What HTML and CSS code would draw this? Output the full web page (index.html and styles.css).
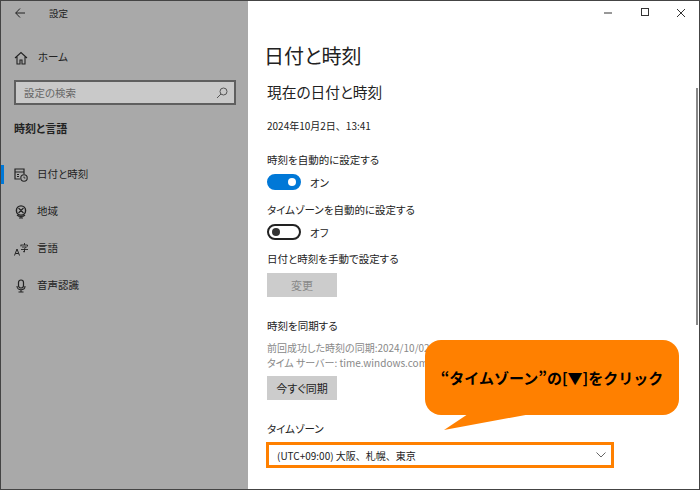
FILE: index.html
```html
<!DOCTYPE html>
<html lang="ja">
<head>
    <meta charset="UTF-8">
    <title>設定</title>
    <link rel="stylesheet" href="styles.css">
</head>
<body>
    <div class="window">
        <aside class="sidebar">
            <div class="titlebar">
                <svg class="back" width="10" height="10" viewBox="0 0 10 10"><path d="M5 .5.7 5 5 9.5M.7 5H10" fill="none" stroke="#222" stroke-width="1"/></svg>
                <span>設定</span>
            </div>
            <div class="nav-item home">
                <svg width="14" height="14" viewBox="0 0 14 14"><path d="M1 7 7 1.5 13 7M3 5.5V13h3V9h2v4h3V5.5" fill="none" stroke="#222" stroke-width="1.1"/></svg>
                <span>ホーム</span>
            </div>
            <div class="search">
                <span>設定の検索</span>
                <svg width="12" height="12" viewBox="0 0 12 12"><circle cx="7.5" cy="4.5" r="3.5" fill="none" stroke="#555"/><path d="M5 7 1 11" stroke="#555"/></svg>
            </div>
            <div class="section">時刻と言語</div>
            <nav>
                <div class="nav-item active">
                    <svg width="14" height="14" viewBox="0 0 14 14"><path d="M6 11H1V1h9v5M1 4h9M3 6.5h2M3 8.5h2" fill="none" stroke="#222" stroke-width="1.2"/><circle cx="10" cy="10" r="3.2" fill="none" stroke="#222" stroke-width="1.1"/><path d="M10 8.5V10h1.4" fill="none" stroke="#222" stroke-width=".8"/></svg>
                    <span>日付と時刻</span>
                </div>
                <div class="nav-item">
                    <svg width="14" height="14" viewBox="0 0 14 14"><circle cx="7" cy="5.5" r="4.6" fill="none" stroke="#222" stroke-width="1.4"/><path d="M4.5 3 9.5 8M9.5 3 4.5 8M3 10c2 2 6 2 8 0M7 11v2M5 13h4" fill="none" stroke="#222" stroke-width="1.1"/></svg>
                    <span>地域</span>
                </div>
                <div class="nav-item">
                    <svg width="14" height="14" viewBox="0 0 14 14"><path d="M.5 13.5 3 7l2.500 6.500M1.500 11.500h3" fill="none" stroke="#222" stroke-width="1"/><path d="M6.500 3h7M7 3v1.500M13.500 3v1.500M8 5h4.500L10.500 6.500V10L9 9.500M7 7.500h7M10.500 1v2" fill="none" stroke="#222" stroke-width=".9"/></svg>
                    <span>言語</span>
                </div>
                <div class="nav-item">
                    <svg width="14" height="14" viewBox="0 0 14 14"><rect x="4.5" y="1" width="5" height="8" rx="2.5" fill="none" stroke="#222" stroke-width="1.2"/><path d="M3 7c0 5 8 5 8 0M7 11v2M4.500 13h5" fill="none" stroke="#222" stroke-width="1.1"/></svg>
                    <span>音声認識</span>
                </div>
            </nav>
        </aside>
        <main class="content">
            <div class="caption">
                <svg width="10" height="2" viewBox="0 0 10 2"><path d="M0 1h8" stroke="#333"/></svg>
                <svg width="10" height="10" viewBox="0 0 10 10"><rect x="1.500" y=".5" width="7" height="7" fill="none" stroke="#333"/></svg>
                <svg width="10" height="10" viewBox="0 0 10 10"><path d="M1 1l8 8M9 1 1 9" stroke="#333" fill="none"/></svg>
            </div>
            <h1>日付と時刻</h1>
            <h2>現在の日付と時刻</h2>
            <p class="now">2024年10月2日、13:41</p>
            <p class="label first">時刻を自動的に設定する</p>
            <div class="toggle-row">
                <span class="toggle on"></span><span>オン</span>
            </div>
            <p class="label">タイムゾーンを自動的に設定する</p>
            <div class="toggle-row last">
                <span class="toggle off"></span><span>オフ</span>
            </div>
            <p class="label">日付と時刻を手動で設定する</p>
            <button class="btn disabled">変更</button>
            <p class="label sync">時刻を同期する</p>
            <p class="info">前回成功した時刻の同期:2024/10/02 13:41<br>タイム サーバー: time.windows.com</p>
            <button class="btn">今すぐ同期</button>
            <p class="label zone">タイムゾーン</p>
            <div class="select">
                <span>(UTC+09:00) 大阪、札幌、東京</span>
                <svg width="10" height="6" viewBox="0 0 10 6"><path d="M.5.5 5 5 9.500.5" fill="none" stroke="#666"/></svg>
            </div>
        </main>
        <div class="scrollbar"></div>
        <div class="callout">
            <span>“タイムゾーン”の[▼]をクリック</span>
        </div>
        <svg class="tail" width="90" height="16" viewBox="0 0 90 16"><path d="M25 0H88L1 16Z" fill="#ff8000"/></svg>
    </div>
</body>
</html>
```

FILE: styles.css
```css
* {
    box-sizing: border-box;
}
body {
    margin: 0;
    font-family: "Noto Sans CJK JP", "Noto Sans", sans-serif;
    font-feature-settings: "palt";
    color: #222;
}
p, h1, h2 {
    margin: 0;
    font-weight: normal;
}
.window {
    position: relative;
    display: flex;
    width: 700px;
    height: 490px;
    border: 1px solid #444;
    background-color: #fff;
    overflow: hidden;
}
.sidebar {
    width: 247px;
    flex-shrink: 0;
    background-color: #a9a9a9;
    font-size: 10.5px;
}
.titlebar {
    display: flex;
    align-items: center;
    height: 24px;
    padding-left: 14px;
    gap: 24px;
    font-size: 9.5px;
}
.nav-item {
    display: flex;
    align-items: center;
    height: 37px;
    padding-left: 13px;
    gap: 9px;
    line-height: 1;
}
.home {
    margin-top: 14px;
    gap: 10px;
}
.search {
    display: flex;
    align-items: center;
    justify-content: space-between;
    width: 222px;
    height: 25px;
    margin: 4px 0 0 13px;
    padding: 0 6px 0 8px;
    background-color: #c9c9c9;
    border: 2px solid #5f5f5f;
    color: #666;
}
.section {
    margin: 15px 0 0 13px;
    font-weight: bold;
    font-size: 11px;
    line-height: 16px;
}
nav {
    margin-top: 20px;
}
.active {
    position: relative;
}
.active::before {
    content: "";
    position: absolute;
    left: 0;
    top: 9px;
    width: 3px;
    height: 19px;
    background-color: #0078d7;
}
.content {
    flex: 1;
    padding-left: 18px;
    font-size: 10.5px;
}
.caption {
    display: flex;
    justify-content: flex-end;
    align-items: center;
    gap: 26px;
    height: 24px;
    padding-right: 13px;
}
h1 {
    margin: 17px 0 0 -2px;
    font-size: 20px;
    line-height: 28px;
}
h2 {
    margin: 12px 0 0 1px;
    font-size: 14.7px;
    line-height: 20px;
}
.now {
    margin: 17px 0 0 1px;
    line-height: 14px;
    font-size: 10px;
    font-feature-settings: normal;
}
.label {
    margin-left: 1px;
    line-height: 14px;
}
.first {
    margin-top: 20px;
}
.toggle-row {
    display: flex;
    align-items: center;
    gap: 9px;
    height: 16px;
    margin: 7px 0 13px 1px;
}
.last {
    margin-bottom: 12px;
}
.toggle {
    position: relative;
    width: 34px;
    height: 16px;
    border-radius: 8px;
    border: 2px solid #222;
}
.toggle::after {
    content: "";
    position: absolute;
    top: 2px;
    width: 8px;
    height: 8px;
    border-radius: 50%;
}
.on {
    background-color: #0078d7;
    border-color: #0078d7;
}
.on::after {
    right: 3px;
    background-color: #fff;
}
.off::after {
    left: 3px;
    background-color: #333;
}
.btn {
    display: block;
    width: 70px;
    height: 24px;
    margin: 7px 0 0 1px;
    padding: 0;
    border: none;
    background-color: #ccc;
    font: inherit;
    font-size: 11px;
    color: #222;
}
.disabled {
    color: #888;
}
.sync {
    margin-top: 22px;
}
.info {
    margin: 7px 0 0 1px;
    font-size: 10px;
    line-height: 15px;
    color: #888;
}
.info + .btn {
    margin-top: 6px;
}
.zone {
    margin-top: 22px;
}
.select {
    display: flex;
    align-items: center;
    justify-content: space-between;
    width: 348px;
    height: 26px;
    margin-top: 6px;
    padding: 0 5px 0 8px;
    border: 3px solid #ff8000;
    font-size: 10px;
    font-feature-settings: normal;
}
.scrollbar {
    position: absolute;
    right: 1px;
    top: 87px;
    width: 2px;
    height: 237px;
    background-color: #888;
}
.callout {
    position: absolute;
    left: 424px;
    top: 339px;
    display: flex;
    align-items: center;
    justify-content: center;
    width: 254px;
    height: 75px;
    border-radius: 16px;
    background-color: #ff8000;
    color: #000;
    font-size: 15px;
    font-weight: bold;
    font-feature-settings: normal;
}
.tail {
    position: absolute;
    left: 442px;
    top: 413px;
}
```
